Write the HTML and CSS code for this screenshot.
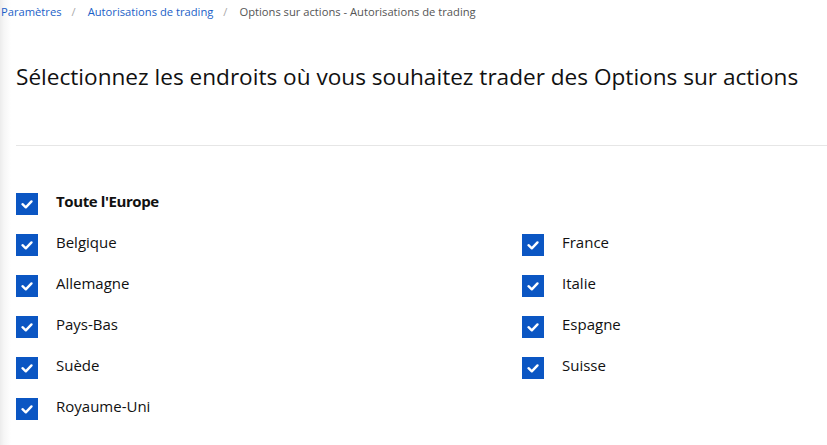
FILE: index.html
```html
<!DOCTYPE html>
<html lang="fr">
<head>
<meta charset="utf-8">
<link rel="stylesheet" href="styles.css">
</head>
<body>
<div class="page">
  <nav class="crumbs">
    <a class="crumb-link">Paramètres</a><span class="sep">/</span>
    <a class="crumb-link">Autorisations de trading</a><span class="sep">/</span>
    <span class="crumb-current">Options sur actions - Autorisations de trading</span>
  </nav>
  <h1 class="title">Sélectionnez les endroits où vous souhaitez trader des Options sur actions</h1>
  <hr class="divider">
  <div class="options">
    <label class="opt opt-all"><span class="box"><svg viewBox="0 0 22 22"><path d="M6.5 11.2 L9.8 14.3 L15.5 8.4" fill="none" stroke="#fff" stroke-width="2.4" stroke-linecap="round" stroke-linejoin="round"/></svg></span><span class="lbl bold">Toute l'Europe</span></label>
    <div class="cols">
      <div class="col">
        <label class="opt"><span class="box"><svg viewBox="0 0 22 22"><path d="M6.5 11.2 L9.8 14.3 L15.5 8.4" fill="none" stroke="#fff" stroke-width="2.4" stroke-linecap="round" stroke-linejoin="round"/></svg></span><span class="lbl">Belgique</span></label>
        <label class="opt"><span class="box"><svg viewBox="0 0 22 22"><path d="M6.5 11.2 L9.8 14.3 L15.5 8.4" fill="none" stroke="#fff" stroke-width="2.4" stroke-linecap="round" stroke-linejoin="round"/></svg></span><span class="lbl">Allemagne</span></label>
        <label class="opt"><span class="box"><svg viewBox="0 0 22 22"><path d="M6.5 11.2 L9.8 14.3 L15.5 8.4" fill="none" stroke="#fff" stroke-width="2.4" stroke-linecap="round" stroke-linejoin="round"/></svg></span><span class="lbl">Pays-Bas</span></label>
        <label class="opt"><span class="box"><svg viewBox="0 0 22 22"><path d="M6.5 11.2 L9.8 14.3 L15.5 8.4" fill="none" stroke="#fff" stroke-width="2.4" stroke-linecap="round" stroke-linejoin="round"/></svg></span><span class="lbl">Suède</span></label>
        <label class="opt"><span class="box"><svg viewBox="0 0 22 22"><path d="M6.5 11.2 L9.8 14.3 L15.5 8.4" fill="none" stroke="#fff" stroke-width="2.4" stroke-linecap="round" stroke-linejoin="round"/></svg></span><span class="lbl">Royaume-Uni</span></label>
      </div>
      <div class="col">
        <label class="opt"><span class="box"><svg viewBox="0 0 22 22"><path d="M6.5 11.2 L9.8 14.3 L15.5 8.4" fill="none" stroke="#fff" stroke-width="2.4" stroke-linecap="round" stroke-linejoin="round"/></svg></span><span class="lbl">France</span></label>
        <label class="opt"><span class="box"><svg viewBox="0 0 22 22"><path d="M6.5 11.2 L9.8 14.3 L15.5 8.4" fill="none" stroke="#fff" stroke-width="2.4" stroke-linecap="round" stroke-linejoin="round"/></svg></span><span class="lbl">Italie</span></label>
        <label class="opt"><span class="box"><svg viewBox="0 0 22 22"><path d="M6.5 11.2 L9.8 14.3 L15.5 8.4" fill="none" stroke="#fff" stroke-width="2.4" stroke-linecap="round" stroke-linejoin="round"/></svg></span><span class="lbl">Espagne</span></label>
        <label class="opt"><span class="box"><svg viewBox="0 0 22 22"><path d="M6.5 11.2 L9.8 14.3 L15.5 8.4" fill="none" stroke="#fff" stroke-width="2.4" stroke-linecap="round" stroke-linejoin="round"/></svg></span><span class="lbl">Suisse</span></label>
      </div>
    </div>
  </div>
</div>
</body>
</html>
```
FILE: styles.css
```css
html, body {
  margin: 0;
  padding: 0;
  background: #fff;
}
body {
  font-family: "Open Sans", "Liberation Sans", sans-serif;
  color: #111;
  width: 827px;
  height: 445px;
  overflow: hidden;
}
.page {
  min-height: 445px;
  background: linear-gradient(to right, #ececec 0px, #f6f6f6 4px, #fff 11px);
  padding-left: 16px;
}
.crumbs {
  margin-left: -15px;
  padding-top: 4px;
  height: 20px;
  font-size: 11.2px;
  line-height: 16px;
  display: flex;
  align-items: flex-start;
}
.crumb-link {
  color: #1b5fc8;
}
.sep {
  color: #aaa;
  margin: 0 12px 0 10px;
}
.crumb-current {
  color: #555;
}
.title {
  margin: 38px 0 0;
  font-size: 22.6px;
  font-weight: 400;
  line-height: 30px;
  color: #111;
}
.divider {
  margin: 53px 0 0;
  border: 0;
  border-top: 1px solid #e6e6e6;
  height: 0;
}
.options {
  padding-top: 38px;
}
.opt {
  display: flex;
  align-items: center;
  height: 41px;
}
.opt-all {
  height: 40px;
}
.box {
  width: 22px;
  height: 22px;
  background: #0b56c3;
  flex: none;
  display: block;
}
.box svg {
  display: block;
  width: 22px;
  height: 22px;
}
.lbl {
  margin-left: 18px;
  font-size: 15px;
  line-height: 20px;
  padding-bottom: 5px;
  color: #111;
}
.bold {
  font-weight: 700;
  letter-spacing: -0.4px;
  padding-bottom: 6px;
}
.cols {
  display: grid;
  grid-template-columns: 506px 1fr;
}
```
